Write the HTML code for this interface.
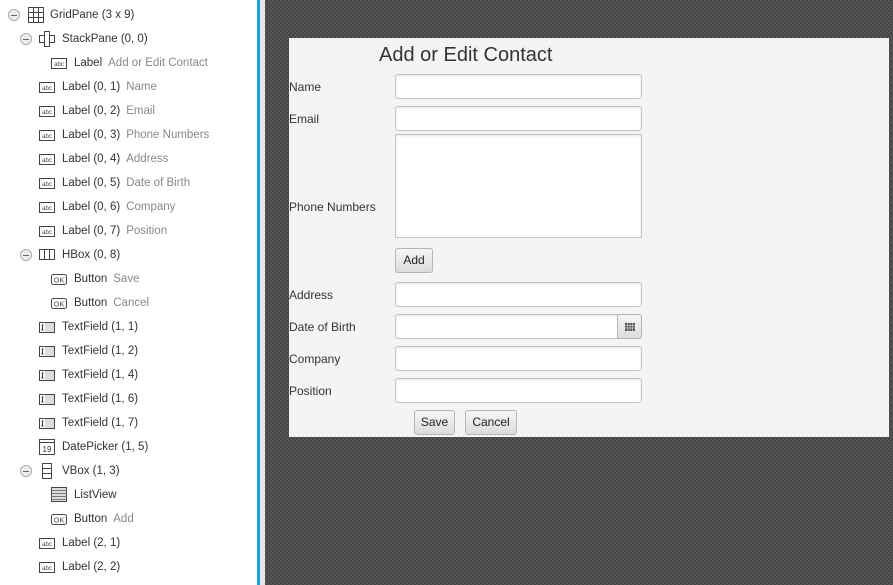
<!DOCTYPE html>
<html><head><style>
*{margin:0;padding:0;box-sizing:border-box}
body{width:893px;height:585px;overflow:hidden;position:relative;font-family:"Liberation Sans",sans-serif;font-size:12px;color:#333;
background-color:#4a4a4a;background-image:repeating-conic-gradient(#444 0 25%,#575757 0 50%);background-size:4px 4px}
#left{position:absolute;left:0;top:0;width:257px;height:585px;background:#fff}
#bord{position:absolute;left:257px;top:0;width:3px;height:585px;background:#1ba1e2}
#strip{position:absolute;left:260px;top:0;width:5px;height:585px;background:#e8e8e8}
.r{position:absolute;height:16px;line-height:16px;white-space:nowrap;font-size:11.5px}
.s{color:#888;margin-left:6px}
.m{position:absolute;width:12px;height:12px;border:1px solid #aaa;border-radius:50%;background:#eee}
.m:after{content:"";position:absolute;left:2px;top:4.5px;width:6px;height:1px;background:#666}
.ic{position:absolute}
#form{position:absolute;left:289px;top:38px;width:600px;height:399px;background:#f4f4f4}
.f{position:absolute;background:#fff;border:1px solid #c4c4c4;border-radius:3px;box-shadow:inset 0 1px 2px #e6e6e6}
.b{position:absolute;height:25px;border:1px solid #b5b5b5;border-radius:3px;background:linear-gradient(#f6f6f6,#dcdcdc);text-align:center;line-height:23px;font-size:12px;color:#222}
.l{position:absolute;left:0;font-size:12px;color:#333}
</style></head><body>
<div id="left"></div><div id="bord"></div><div id="strip"></div>
<svg width="0" height="0" style="position:absolute"><defs>
<g id="abc"><rect x="0.5" y="0.5" width="15" height="10" fill="#fff" stroke="#444"/><text x="8" y="8" font-size="6" text-anchor="middle" fill="#444" font-family="Liberation Sans">abc</text></g>
<g id="ok"><rect x="0.5" y="0.5" width="15" height="10" rx="2" fill="#fff" stroke="#444"/><text x="8" y="8.5" font-size="7.5" text-anchor="middle" fill="#444" font-family="Liberation Sans">OK</text></g>
<g id="tf"><rect x="0.5" y="0.5" width="15" height="10" fill="#ddd" stroke="#444"/><rect x="1" y="1" width="5" height="9" fill="#fff"/><path d="M2.5 3h2M3.5 3v5M2.5 8h2" stroke="#333"/></g>
</defs></svg>
<div id="tree"></div>
<script>
var rows=[
[0,1,'grid','GridPane (3 x 9)',''],
[1,1,'stack','StackPane (0, 0)',''],
[2,0,'abc','Label','Add or Edit Contact'],
[1,0,'abc','Label (0, 1)','Name'],
[1,0,'abc','Label (0, 2)','Email'],
[1,0,'abc','Label (0, 3)','Phone Numbers'],
[1,0,'abc','Label (0, 4)','Address'],
[1,0,'abc','Label (0, 5)','Date of Birth'],
[1,0,'abc','Label (0, 6)','Company'],
[1,0,'abc','Label (0, 7)','Position'],
[1,1,'hbox','HBox (0, 8)',''],
[2,0,'ok','Button','Save'],
[2,0,'ok','Button','Cancel'],
[1,0,'tf','TextField (1, 1)',''],
[1,0,'tf','TextField (1, 2)',''],
[1,0,'tf','TextField (1, 4)',''],
[1,0,'tf','TextField (1, 6)',''],
[1,0,'tf','TextField (1, 7)',''],
[1,0,'date','DatePicker (1, 5)',''],
[1,1,'vbox','VBox (1, 3)',''],
[2,0,'list','ListView',''],
[2,0,'ok','Button','Add'],
[1,0,'abc','Label (2, 1)',''],
[1,0,'abc','Label (2, 2)','']];
var icons={
grid:'<rect x="0.5" y="0.5" width="15" height="15" fill="#fff" stroke="#444"/><path d="M5.5 0v16M10.5 0v16M0 5.5h16M0 10.5h16" stroke="#444"/>',
stack:'<rect x="5.5" y="0.5" width="5" height="15" fill="#fff" stroke="#444"/><rect x="0.5" y="4.5" width="5" height="7" fill="#fff" stroke="#444"/><rect x="10.5" y="4.5" width="5" height="7" fill="#fff" stroke="#444"/>',
hbox:'<rect x="0.5" y="2.5" width="15" height="10" fill="#fff" stroke="#444"/><path d="M5.5 2v11M10.5 2v11" stroke="#444"/>',
vbox:'<rect x="3.5" y="0.5" width="9" height="15" fill="#fff" stroke="#444"/><path d="M3 5.5h10M3 10.5h10" stroke="#444"/>',
list:'<rect x="0.5" y="0.5" width="15" height="14" fill="#ddd" stroke="#444"/><path d="M0 3.5h16M0 6.5h16M0 9.5h16M0 12.5h16" stroke="#777"/>',
date:'<rect x="0.5" y="0.5" width="15" height="15" fill="#fff" stroke="#444"/><path d="M0 3.5h16" stroke="#444"/><text x="8" y="13" font-size="8" text-anchor="middle" fill="#333" font-family="Liberation Sans">19</text>',
abc:'<g transform="translate(0,3)"><use href="#abc"/></g>',
ok:'<g transform="translate(0,3)"><use href="#ok"/></g>',
tf:'<g transform="translate(0,3)"><use href="#tf"/></g>'};
var h='';
rows.forEach(function(r,i){var cy=15+24*i,lv=r[0];
var ix=28,tx=50;
if(lv==1){ix=39;tx=62}if(lv==2){ix=51;tx=74}
if(r[1])h+='<div class="m" style="left:'+(8+12*lv)+'px;top:'+(cy-6)+'px"></div>';
h+='<svg class="ic" width="16" height="16" style="left:'+ix+'px;top:'+(cy-8)+'px">'+icons[r[2]]+'</svg>';
h+='<div class="r" style="left:'+tx+'px;top:'+(cy-8)+'px">'+r[3]+(r[4]?'<span class="s">'+r[4]+'</span>':'')+'</div>';});
document.getElementById('tree').innerHTML=h;
</script>
<div id="form">
<div style="position:absolute;left:90px;top:6px;font-size:20px;color:#333">Add or Edit Contact</div>
<div class="l" style="top:42px">Name</div>
<div class="f" style="left:106px;top:36px;width:247px;height:25px"></div>
<div class="l" style="top:74px">Email</div>
<div class="f" style="left:106px;top:68px;width:247px;height:25px"></div>
<div class="l" style="top:162px">Phone Numbers</div>
<div class="f" style="left:106px;top:96px;width:247px;height:104px;border-radius:0"></div>
<div class="b" style="left:106px;top:210px;width:38px">Add</div>
<div class="l" style="top:250px">Address</div>
<div class="f" style="left:106px;top:244px;width:247px;height:25px"></div>
<div class="l" style="top:282px">Date of Birth</div>
<div class="f" style="left:106px;top:276px;width:247px;height:25px"></div>
<div class="b" style="left:328px;top:276px;width:25px;border-radius:0 3px 3px 0"><svg width="10" height="8" style="margin-top:8px"><rect width="10" height="8" fill="#555"/><path d="M0 2.5h10M0 5h10M2.5 0v8M5 0v8M7.5 0v8" stroke="#ccc" stroke-width="0.7"/></svg></div>
<div class="l" style="top:314px">Company</div>
<div class="f" style="left:106px;top:308px;width:247px;height:25px"></div>
<div class="l" style="top:346px">Position</div>
<div class="f" style="left:106px;top:340px;width:247px;height:25px"></div>
<div class="b" style="left:125px;top:372px;width:41px">Save</div>
<div class="b" style="left:176px;top:372px;width:52px">Cancel</div>
</div>
</body></html>
